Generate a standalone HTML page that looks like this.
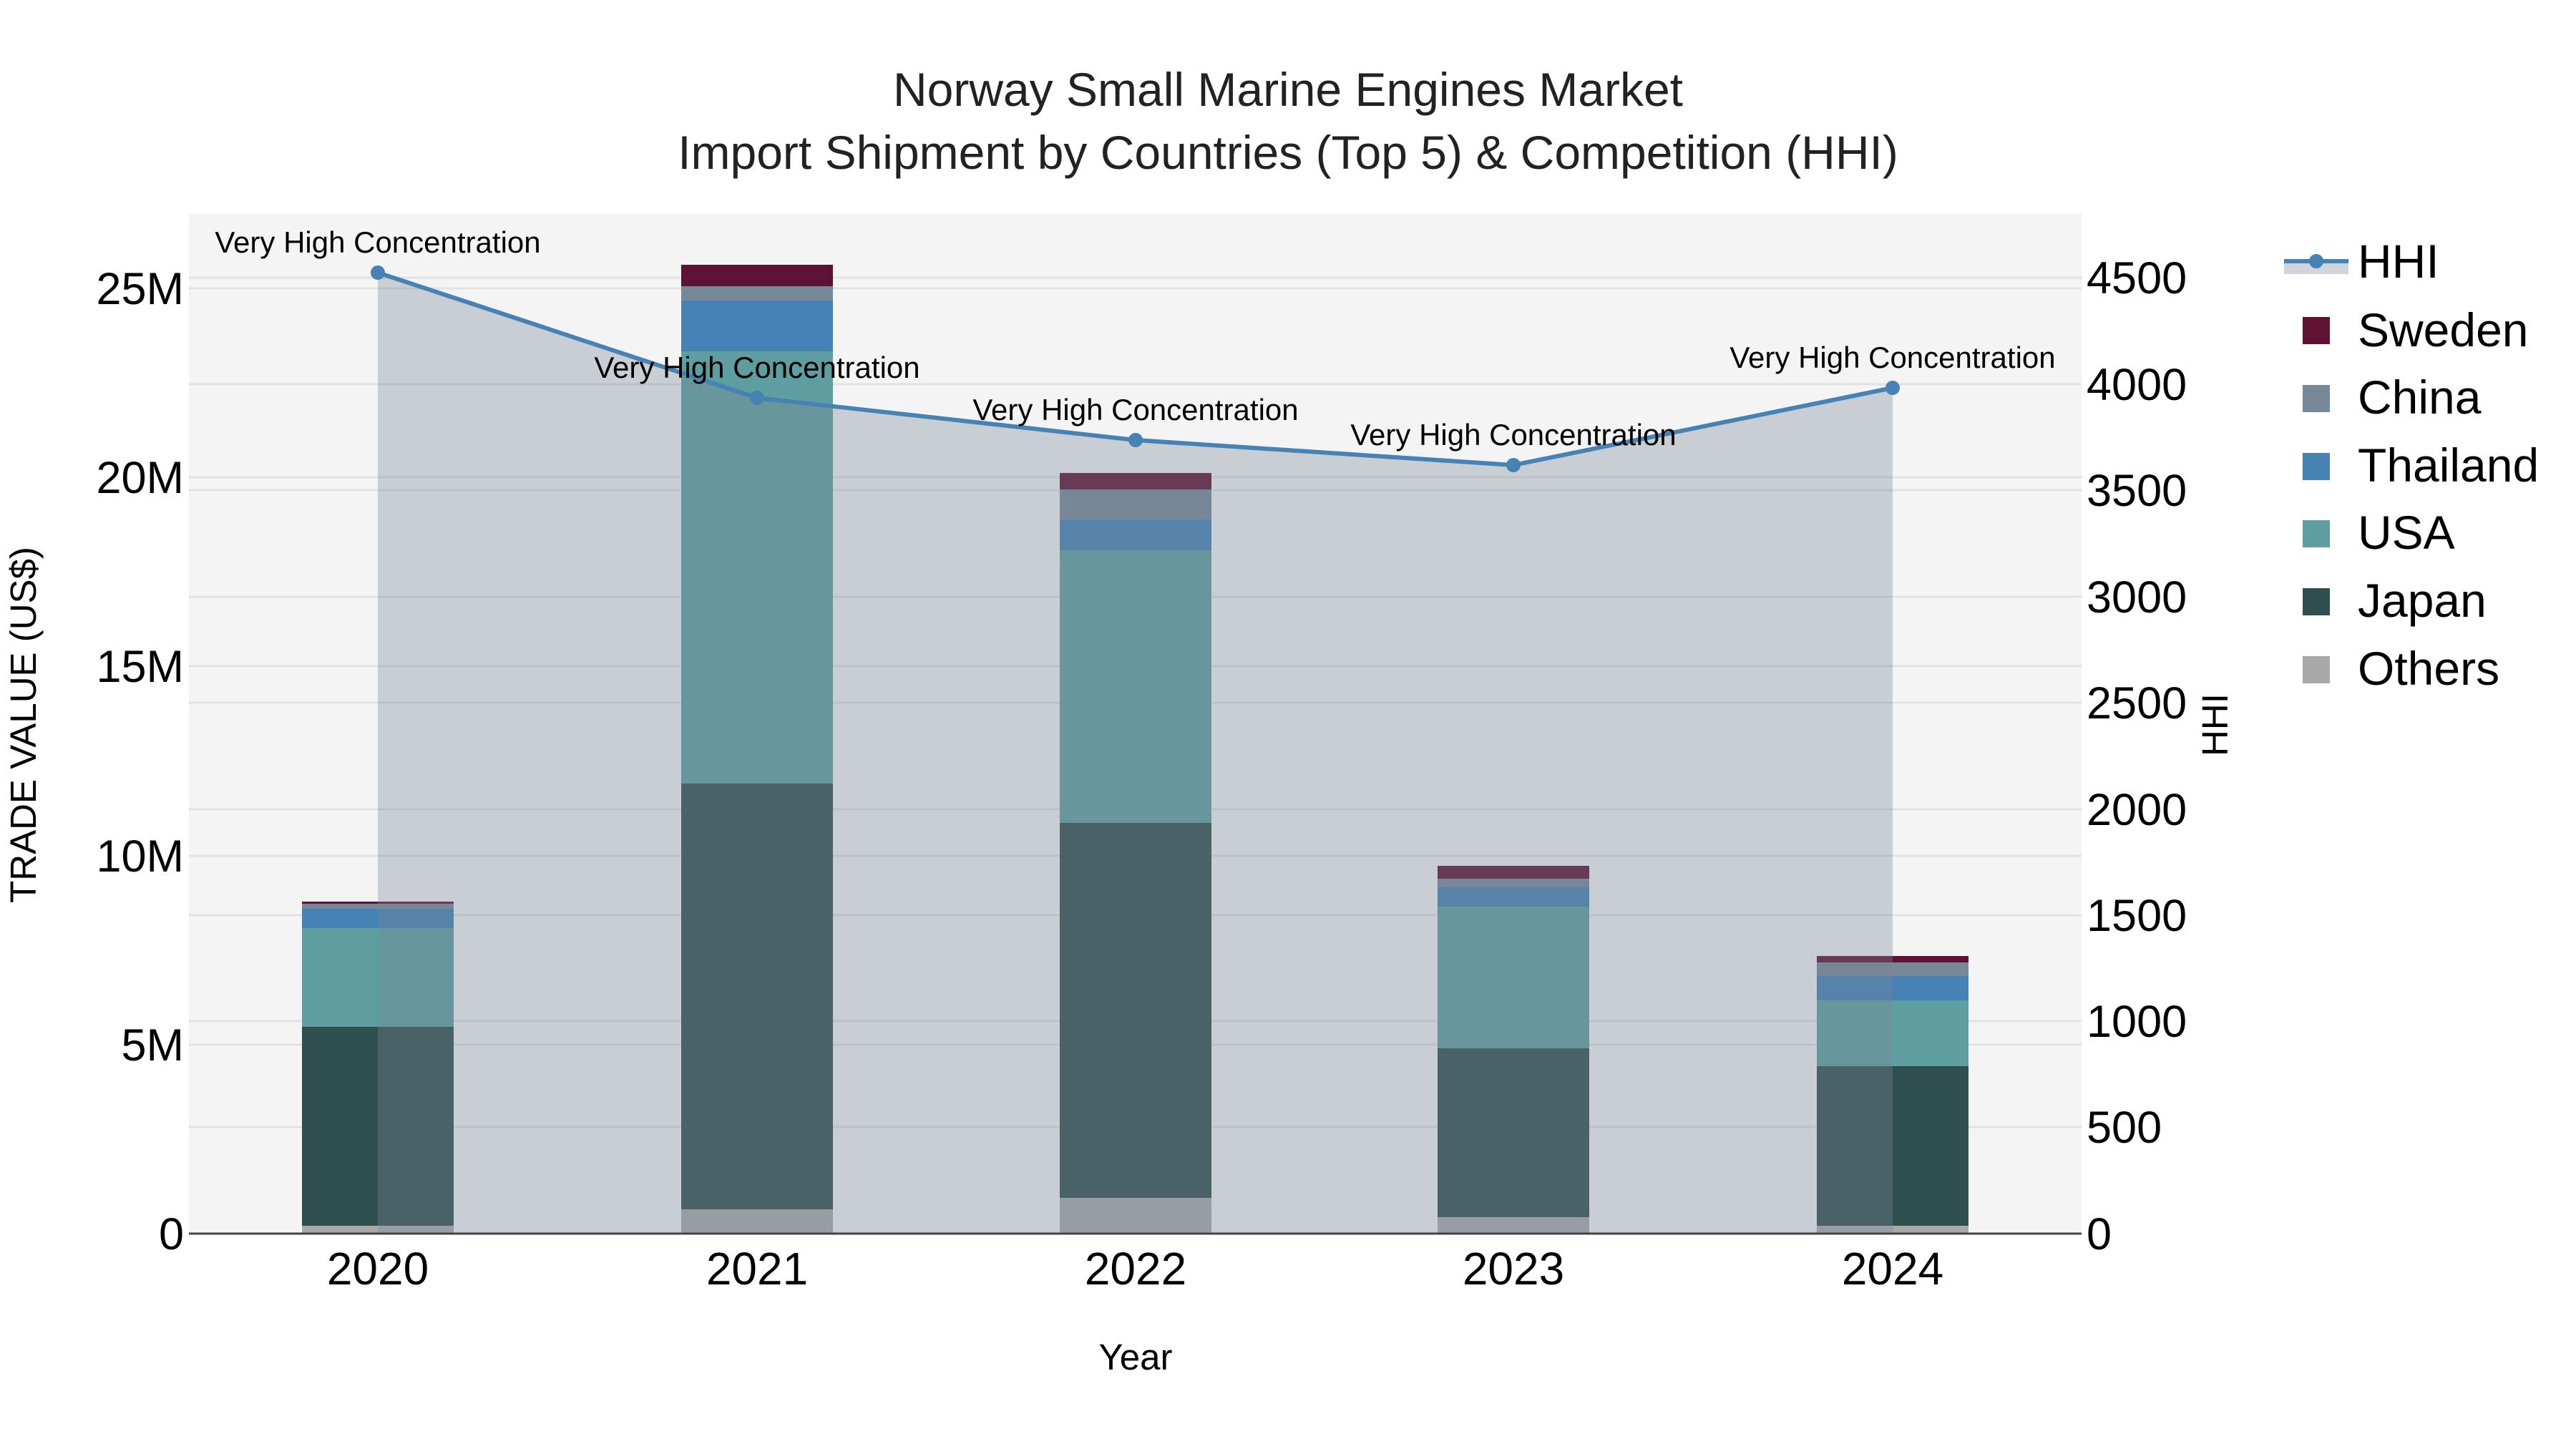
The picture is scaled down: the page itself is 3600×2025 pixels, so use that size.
<!DOCTYPE html>
<html><head><meta charset="utf-8"><style>html,body{margin:0;padding:0;background:#fff}svg{display:block}text{font-family:"Liberation Sans",sans-serif}</style></head>
<body>
<svg width="3600" height="2025" viewBox="0 0 3600 2025" xmlns="http://www.w3.org/2000/svg">
<rect x="0" y="0" width="3600" height="2025" fill="#fff"/>
<rect x="264" y="299" width="2645" height="1425" fill="#f4f4f4"/>
<g stroke="#e2e2e2" stroke-width="3">
<line x1="264" x2="2909" y1="1460" y2="1460"/><line x1="264" x2="2909" y1="1196" y2="1196"/><line x1="264" x2="2909" y1="931" y2="931"/><line x1="264" x2="2909" y1="667" y2="667"/><line x1="264" x2="2909" y1="403" y2="403"/>
<line x1="264" x2="2909" y1="1575" y2="1575"/><line x1="264" x2="2909" y1="1427" y2="1427"/><line x1="264" x2="2909" y1="1279" y2="1279"/><line x1="264" x2="2909" y1="1131" y2="1131"/><line x1="264" x2="2909" y1="982" y2="982"/><line x1="264" x2="2909" y1="834" y2="834"/><line x1="264" x2="2909" y1="685" y2="685"/><line x1="264" x2="2909" y1="537" y2="537"/><line x1="264" x2="2909" y1="388" y2="388"/>
</g>
<g>
<rect x="422" y="1713" width="212" height="11" fill="#a9a9a9"/><rect x="422" y="1435" width="212" height="278" fill="#2f4f4f"/><rect x="422" y="1297" width="212" height="138" fill="#5f9ea0"/><rect x="422" y="1270" width="212" height="27" fill="#4682b4"/><rect x="422" y="1263" width="212" height="7" fill="#778899"/><rect x="422" y="1260" width="212" height="3" fill="#5e1234"/>
<rect x="952" y="1690" width="212" height="34" fill="#a9a9a9"/><rect x="952" y="1095" width="212" height="595" fill="#2f4f4f"/><rect x="952" y="491" width="212" height="604" fill="#5f9ea0"/><rect x="952" y="420" width="212" height="71" fill="#4682b4"/><rect x="952" y="400" width="212" height="20" fill="#778899"/><rect x="952" y="370" width="212" height="30" fill="#5e1234"/>
<rect x="1481" y="1674" width="212" height="50" fill="#a9a9a9"/><rect x="1481" y="1150" width="212" height="524" fill="#2f4f4f"/><rect x="1481" y="769" width="212" height="381" fill="#5f9ea0"/><rect x="1481" y="726" width="212" height="43" fill="#4682b4"/><rect x="1481" y="684" width="212" height="42" fill="#778899"/><rect x="1481" y="661" width="212" height="23" fill="#5e1234"/>
<rect x="2009" y="1701" width="212" height="23" fill="#a9a9a9"/><rect x="2009" y="1465" width="212" height="236" fill="#2f4f4f"/><rect x="2009" y="1267" width="212" height="198" fill="#5f9ea0"/><rect x="2009" y="1240" width="212" height="27" fill="#4682b4"/><rect x="2009" y="1228" width="212" height="12" fill="#778899"/><rect x="2009" y="1210" width="212" height="18" fill="#5e1234"/>
<rect x="2539" y="1713" width="212" height="11" fill="#a9a9a9"/><rect x="2539" y="1490" width="212" height="223" fill="#2f4f4f"/><rect x="2539" y="1398" width="212" height="92" fill="#5f9ea0"/><rect x="2539" y="1364" width="212" height="34" fill="#4682b4"/><rect x="2539" y="1345" width="212" height="19" fill="#778899"/><rect x="2539" y="1336" width="212" height="9" fill="#5e1234"/>
</g>
<polygon points="528,1724 528,381 1058,556 1587,615 2115,650 2645,542 2645,1724" fill="#778899" fill-opacity="0.35"/>
<line x1="264" x2="2909" y1="1724" y2="1724" stroke="#444" stroke-width="3"/>
<polyline points="528,381 1058,556 1587,615 2115,650 2645,542" fill="none" stroke="#4682b4" stroke-width="6"/>
<g fill="#4682b4"><circle cx="528" cy="381" r="10"/><circle cx="1058" cy="556" r="10"/><circle cx="1587" cy="615" r="10"/><circle cx="2115" cy="650" r="10"/><circle cx="2645" cy="542" r="10"/></g>
<g font-size="42" text-anchor="middle" fill="#000">
<text x="528" y="353">Very High Concentration</text><text x="1058" y="528">Very High Concentration</text><text x="1587" y="587">Very High Concentration</text><text x="2115" y="622">Very High Concentration</text><text x="2645" y="514">Very High Concentration</text>
</g>
<g font-size="63" text-anchor="end" fill="#000">
<text x="257" y="1746">0</text><text x="257" y="1482">5M</text><text x="257" y="1218">10M</text><text x="257" y="953">15M</text><text x="257" y="689">20M</text><text x="257" y="425">25M</text>
</g>
<g font-size="63" text-anchor="start" fill="#000">
<text x="2916" y="1746">0</text><text x="2916" y="1597">500</text><text x="2916" y="1449">1000</text><text x="2916" y="1301">1500</text><text x="2916" y="1153">2000</text><text x="2916" y="1004">2500</text><text x="2916" y="856">3000</text><text x="2916" y="707">3500</text><text x="2916" y="559">4000</text><text x="2916" y="410">4500</text>
</g>
<g font-size="64" text-anchor="middle" fill="#000">
<text x="528" y="1795">2020</text><text x="1058" y="1795">2021</text><text x="1587" y="1795">2022</text><text x="2115" y="1795">2023</text><text x="2645" y="1795">2024</text>
</g>
<text x="1587" y="1914" font-size="51" text-anchor="middle">Year</text>
<text transform="translate(50,1013) rotate(-90)" font-size="51" text-anchor="middle">TRADE VALUE (US$)</text>
<text transform="translate(3113,1013) rotate(-90)" font-size="51" text-anchor="middle">HHI</text>
<g font-size="66" text-anchor="middle" fill="#222">
<text x="1800" y="148">Norway Small Marine Engines Market</text>
<text x="1800" y="236">Import Shipment by Countries (Top 5) &amp; Competition (HHI)</text>
</g>
<rect x="3192" y="365" width="90" height="18" fill="#778899" fill-opacity="0.35"/>
<line x1="3192" x2="3282" y1="365" y2="365" stroke="#4682b4" stroke-width="6"/>
<circle cx="3237" cy="365" r="10" fill="#4682b4"/>
<rect x="3218" y="443" width="38" height="38" fill="#5e1234"/>
<rect x="3218" y="538" width="38" height="38" fill="#778899"/>
<rect x="3218" y="633" width="38" height="38" fill="#4682b4"/>
<rect x="3218" y="727" width="38" height="38" fill="#5f9ea0"/>
<rect x="3218" y="822" width="38" height="38" fill="#2f4f4f"/>
<rect x="3218" y="917" width="38" height="38" fill="#a9a9a9"/>
<g font-size="66" fill="#000">
<text x="3295" y="388">HHI</text><text x="3295" y="484">Sweden</text><text x="3295" y="578">China</text><text x="3295" y="673">Thailand</text><text x="3295" y="767">USA</text><text x="3295" y="862">Japan</text><text x="3295" y="957">Others</text>
</g>
</svg>
</body></html>
